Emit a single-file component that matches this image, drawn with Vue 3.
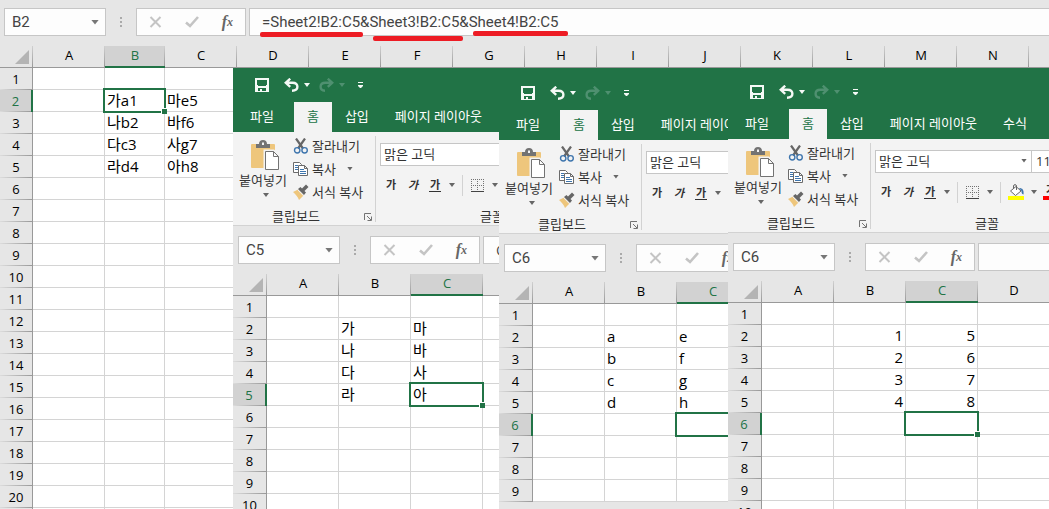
<script setup>
const letters = 'ABCDEFGHIJKLMNO'.split('')

const makeColumns = (count, narrow = {}) =>
  letters.slice(0, count).map((letter) => ({ letter, width: narrow[letter] ?? 72 }))

const main = {
  id: 'main',
  active: 'B2',
  formula: '=Sheet2!B2:C5&Sheet3!B2:C5&Sheet4!B2:C5',
  columns: makeColumns(15, { B: 60 }),
  rows: 21,
  gutter: 33,
  cells: {
    B2: '가a1', C2: '마e5',
    B3: '나b2', C3: '바f6',
    B4: '다c3', C4: '사g7',
    B5: '라d4', C5: '아h8'
  }
}

const tabs = ['파일', '홈', '삽입', '페이지 레이아웃', '수식']

const insets = [
  {
    id: 'sheet2',
    titleGap: 0,
    tabs: tabs.slice(0, 4),
    active: 'C5',
    formula: '아',
    columns: makeColumns(4),
    rows: 10,
    gutter: 34,
    cells: { B2: '가', C2: '마', B3: '나', C3: '바', B4: '다', C4: '사', B5: '라', C5: '아' }
  },
  {
    id: 'sheet3',
    titleGap: 8,
    tabs: tabs.slice(0, 4),
    active: 'C6',
    formula: '',
    columns: makeColumns(3),
    rows: 9,
    gutter: 34,
    cells: { B2: 'a', C2: 'e', B3: 'b', C3: 'f', B4: 'c', C4: 'g', B5: 'd', C5: 'h' }
  },
  {
    id: 'sheet4',
    titleGap: 7,
    tabs,
    active: 'C6',
    formula: '',
    columns: makeColumns(4),
    rows: 10,
    gutter: 34,
    cells: { B2: 1, C2: 5, B3: 2, C3: 6, B4: 3, C4: 7, B5: 4, C5: 8 }
  }
]

const books = [main, ...insets]

const tableWidth = (book) =>
  book.gutter + book.columns.reduce((sum, column) => sum + column.width, 0) + 'px'
const activeColumn = (book) => book.active[0]
const activeRow = (book) => Number(book.active.slice(1))
</script>

<template>
  <main class="desk">
    <section
      v-for="book in books"
      :key="book.id"
      class="book"
      :class="[book.id, { inset: book !== main }]"
    >
      <header v-if="book !== main" class="top">
        <div class="quick" :style="{ marginTop: book.titleGap + 'px' }">
          <button class="save" aria-label="저장">
            <svg width="14" height="14" viewBox="0 0 14 14" shape-rendering="crispEdges">
              <path fill="#f5f9f6" fill-rule="evenodd" d="M0 0H14V14H0ZM2 2V7H3V8H11V7H12V2ZM3 10V13H5V11H7V13H11V10Z" />
            </svg>
          </button>
          <button class="undo" aria-label="실행 취소">
            <svg width="15" height="14" viewBox="0 0 15 14" fill="none" stroke="#f5f9f6" stroke-width="2.4">
              <path d="M6.2 0.7L1.8 4.8L6.2 8.8M2.2 4.8H8.5C12 4.8 13.4 6.6 13.4 8.8C13.4 11.3 11.6 12.7 8 12.8" />
            </svg>
          </button>
          <i class="caret light"></i>
          <button class="redo" aria-label="다시 실행">
            <svg width="15" height="14" viewBox="0 0 15 14" fill="none" stroke="#4f9070" stroke-width="2.4">
              <path d="M8.8 0.7L13.2 4.8L8.8 8.8M12.8 4.8H6.5C3 4.8 1.6 6.6 1.6 8.8C1.6 11.3 3.4 12.7 6 12.8" />
            </svg>
          </button>
          <i class="caret faint"></i>
          <button class="customize" aria-label="빠른 실행 도구 모음 사용자 지정">
            <svg width="5" height="7" viewBox="0 0 5 7" fill="#f5f9f6">
              <path d="M0 0H5V1H0ZM0 3H5V4L3 6H2L0 4Z" />
            </svg>
          </button>
        </div>
        <nav class="tabs">
          <button v-for="tab in book.tabs" :key="tab" :class="{ file: tab === '파일', home: tab === '홈' }">{{ tab }}</button>
        </nav>
      </header>

      <div v-if="book !== main" class="ribbon">
        <div class="group clipboard">
          <div class="tools">
            <button class="paste">
              <svg width="28" height="30" viewBox="0 0 28 30">
                <rect x="0" y="4" width="24" height="24" rx="1" fill="#eec67c" />
                <path d="M5 8V4H8C8 1.5 9.5 0 12 0S16 1.5 16 4H19V8Z" fill="#737373" />
                <rect x="11" y="2.5" width="2" height="2.5" fill="#f3f3f3" />
                <path d="M14 11H22.5L27.5 16V29.5H14Z" fill="#fff" stroke="#f3f3f3" stroke-width="3" />
                <path d="M14.5 11.5H22.5L27.5 16.5V29.5H14.5ZM22.5 11.5V16.5H27.5" fill="#fff" stroke="#737373" />
              </svg>
              <span>붙여넣기</span>
              <i class="caret"></i>
            </button>
            <div class="actions">
              <button>
                <svg width="16" height="16" viewBox="0 0 16 16" fill="none">
                  <path d="M3 .5L10 10.5M12 .5L5 10.5" stroke="#666" stroke-width="2.2" />
                  <circle cx="4.2" cy="12.3" r="2.7" stroke="#3e75ad" stroke-width="1.4" />
                  <circle cx="11.6" cy="12.3" r="2.7" stroke="#3e75ad" stroke-width="1.4" />
                </svg>
                <span>잘라내기</span>
              </button>
              <button>
                <svg width="16" height="16" viewBox="0 0 16 16" fill="#fff" stroke="#6b6b6b">
                  <path d="M.5 1.5H6.5L8.5 3.5V11.5H.5Z" />
                  <path d="M2 4.5H5M2 6.5H5M2 8.5H5" stroke="#3e75ad" />
                  <path d="M5.5 4.5H11.5L14.5 7.5V14.5H5.5ZM11.5 4.5V7.5H14.5" />
                  <path d="M7 8.5H11M7 10.5H13M7 12.5H13" stroke="#3e75ad" />
                </svg>
                <span>복사</span>
                <i class="caret"></i>
              </button>
              <button>
                <svg width="16" height="16" viewBox="0 0 16 16">
                  <path d="M0 8L5 5.5L10.5 11.5L6 16C5 13 2.5 10 0 8Z" fill="#eec67c" />
                  <path d="M5 5L7.5 3L9 4.5L13 0.5L15.5 3L11.5 7L13 8.5L11 11Z" fill="#666" />
                  <path d="M4.5 5.5L10.5 11.8" stroke="#f3f3f3" />
                </svg>
                <span>서식 복사</span>
              </button>
            </div>
          </div>
          <div class="caption">
            <span>클립보드</span>
            <button aria-label="클립보드 옵션">
              <svg width="8" height="8" viewBox="0 0 8 8" fill="none" stroke="#737373">
                <path d="M.5 7V.5H7M3 3L7 7M7.5 3.5V7.5H3.5" />
              </svg>
            </button>
          </div>
        </div>

        <div class="group font">
          <div class="tools">
            <div class="pickers">
              <button class="family"><span>맑은 고딕</span><i class="caret"></i></button>
              <button class="size">11</button>
            </div>
            <div class="styles">
              <button class="ga bold">가</button>
              <button class="ga italic">가</button>
              <button class="ga underline">가</button>
              <i class="caret"></i>
              <i class="rule"></i>
              <button class="borders" aria-label="테두리">
                <svg width="13" height="13" viewBox="0 0 13 13" fill="none" stroke="#737373">
                  <path d="M0 .5H13M0 6.5H13M.5 0V12M6.5 0V12M12.5 0V12" stroke-dasharray="1 1" />
                  <path d="M0 12.5H13" stroke="#444" />
                </svg>
              </button>
              <i class="caret"></i>
              <i class="rule"></i>
              <button class="fill" aria-label="채우기 색">
                <svg width="17" height="16" viewBox="0 0 17 16" fill="none">
                  <path d="M2.5 7L8 2.5L13 7L7.5 11.5Z" fill="#fff" stroke="#666" />
                  <path d="M5.5 5V2C5.5.2 8.5.2 8.5 2V6" stroke="#666" />
                  <path d="M11 4C14.5 4 16 6 15.5 10.5C13.5 10 13.5 8 13.5 7Z" fill="#3e75ad" />
                  <path d="M0 12H16V16H0Z" fill="#ff0" />
                </svg>
              </button>
              <i class="caret"></i>
              <button class="ga colour">가</button>
            </div>
          </div>
          <div class="caption"><span>글꼴</span></div>
        </div>
      </div>

      <div class="formula-bar">
        <div class="name-box">
          <input :value="book.active" aria-label="이름 상자" readonly />
          <i class="caret wide"></i>
        </div>
        <div class="grip"><i></i><i></i><i></i></div>
        <div class="entry">
          <button aria-label="취소">
            <svg width="13" height="12" viewBox="0 0 13 12" fill="none" stroke="#c4c4c4" stroke-width="2">
              <path d="M1.5 1L11.5 11M11.5 1L1.5 11" />
            </svg>
          </button>
          <button aria-label="입력">
            <svg width="14" height="12" viewBox="0 0 14 12" fill="none" stroke="#c4c4c4" stroke-width="2.6">
              <path d="M1 6.5L5 10L13 1" />
            </svg>
          </button>
          <button class="fx" aria-label="함수 삽입">f<small>x</small></button>
        </div>
        <input class="formula" :value="book.formula" aria-label="수식 입력줄" readonly />
      </div>

      <div class="sheet">
        <table :style="{ width: tableWidth(book) }">
          <colgroup>
            <col :style="{ width: book.gutter + 'px' }" />
            <col v-for="column in book.columns" :key="column.letter" :style="{ width: column.width + 'px' }" />
          </colgroup>
          <thead>
            <tr>
              <th class="corner">
                <svg width="14" height="14" viewBox="0 0 14 14"><path d="M14 0V14H0Z" fill="#b4b4b4" /></svg>
              </th>
              <th
                v-for="column in book.columns"
                :key="column.letter"
                scope="col"
                :class="{ on: column.letter === activeColumn(book) }"
              >{{ column.letter }}</th>
            </tr>
          </thead>
          <tbody>
            <tr v-for="row in book.rows" :key="row">
              <th scope="row" :class="{ on: row === activeRow(book) }">{{ row }}</th>
              <td
                v-for="column in book.columns"
                :key="column.letter"
                :class="{
                  number: typeof book.cells[column.letter + row] === 'number',
                  active: column.letter + row === book.active
                }"
              >{{ book.cells[column.letter + row] }}<i v-if="column.letter + row === book.active" class="handle"></i></td>
            </tr>
          </tbody>
        </table>
      </div>
    </section>

    <i class="mark first"></i>
    <i class="mark second"></i>
    <i class="mark third"></i>
  </main>
</template>

<style>
body {
  margin: 0;
}
</style>

<style scoped>
.desk {
  position: relative;
  display: grid;
  grid-template-columns: 233px 266px 229px minmax(0, 1fr);
  grid-template-rows: 68px minmax(0, 1fr);
  height: 100vh;
  overflow: hidden;
  background: #e6e6e6;
  color: #000;
  font-family: "Open Sans", "Noto Sans CJK KR", sans-serif;
  font-size: 15px;
}
.book {
  min-width: 0;
  overflow: hidden;
  background: #e6e6e6;
}
.main { grid-area: 1 / 1 / 3 / 5; }
.sheet2 { grid-area: 2 / 2; }
.sheet3 { grid-area: 2 / 3; }
.sheet4 { grid-area: 2 / 4; }

button {
  display: flex;
  align-items: center;
  padding: 0;
  border: 0;
  background: none;
  color: inherit;
  font: inherit;
  white-space: nowrap;
}
svg {
  display: block;
  flex: none;
}
.caret {
  flex: none;
  width: 6px;
  height: 4px;
  background: #666;
  clip-path: polygon(0 0, 100% 0, 50% 100%);
}
.caret.light { background: #f5f9f6; }
.caret.faint { background: #4f9070; }
.caret.wide {
  width: 8px;
  height: 5px;
  background: #777;
}

.top {
  display: flow-root;
  background: #217346;
}
.quick {
  display: flex;
  align-items: center;
  height: 34px;
  padding-left: 22px;
}
.undo { margin-left: 15px; }
.redo { margin-left: 9px; }
.quick .caret { margin-left: 5px; }
.customize { margin-left: 13px; }
.tabs {
  display: flex;
  height: 30px;
  color: #fff;
  font-size: 13px;
}
.tabs button {
  flex: none;
  padding: 0 13px 4px;
}
.tabs .file { padding: 0 20px 4px 17px; }
.tabs .home {
  background: #f3f3f3;
  color: #217346;
}

.ribbon {
  display: flex;
  height: 93px;
  border-bottom: 1px solid #d2d2d2;
  background: #f3f3f3;
  color: #333;
  font-size: 13px;
  line-height: 16px;
}
.group {
  display: flex;
  flex: none;
  flex-direction: column;
  justify-content: space-between;
  box-sizing: border-box;
  height: 86px;
  margin-top: 4px;
}
.clipboard {
  width: 143px;
  border-right: 1px solid #d2d2d2;
}
.font { width: 232px; }
.clipboard .tools { display: flex; }
.paste {
  flex-direction: column;
  width: 60px;
  padding-top: 4px;
}
.paste svg { margin-left: 4px; }
.paste span { margin-top: 2px; }
.paste .caret { margin: 5px 0 0 6px; }
.actions { margin-top: -2px; }
.actions button {
  gap: 3px;
  height: 23px;
}
.actions .caret { margin-left: 8px; }
.caption {
  display: flex;
  align-items: center;
  height: 12px;
  line-height: 12px;
}
.caption span {
  width: 126px;
  text-align: center;
}
.caption button { margin: 2px 0 0 5px; }
.font .caption span { width: 100%; }

.pickers {
  display: flex;
  margin: 7px 0 0 4px;
}
.pickers button {
  box-sizing: border-box;
  height: 23px;
  padding-bottom: 2px;
  border: 1px solid #c6c6c6;
  background: #fff;
}
.pickers .family {
  justify-content: space-between;
  width: 157px;
  padding-left: 3px;
  padding-right: 4px;
}
.pickers .size {
  width: 48px;
  margin-left: -1px;
  padding-left: 4px;
}
.styles {
  display: flex;
  align-items: center;
  height: 22px;
  margin: 8px 0 0 9px;
}
.styles .ga {
  flex: none;
  justify-content: center;
  width: 12px;
  height: 14px;
  margin-right: 10px;
  font-size: 11px;
  font-weight: 700;
}
.styles .italic { font-style: italic; }
.styles .underline {
  margin-right: 8px;
  border-bottom: 1px solid #333;
}
.styles .rule {
  flex: none;
  width: 1px;
  height: 21px;
  margin: 0 8px 0 7px;
  background: #d2d2d2;
}
.borders + .caret { margin-left: 8px; }
.fill { margin-left: -1px; }
.fill + .caret { margin: 0 6px; }
.styles .colour {
  width: 16px;
  height: 16px;
  margin-right: 0;
  border-bottom: 4px solid #f00;
}

.formula-bar {
  display: flex;
  height: 28px;
  padding: 8px 0 10px 4px;
  color: #444;
  font-family: Roboto, "Noto Sans CJK KR", sans-serif;
}
.inset .formula-bar { padding: 10px 0 10px 5px; }
.name-box,
.entry,
.formula {
  box-sizing: border-box;
  height: 28px;
  border: 1px solid #c6c6c6;
  background: #fdfdfd;
}
.formula-bar input {
  outline: 0;
  color: inherit;
  font: inherit;
}
.name-box {
  display: flex;
  flex: none;
  align-items: center;
  width: 102px;
  padding: 0 6px 0 7px;
}
.name-box input {
  flex: 1;
  min-width: 0;
  padding: 0;
  border: 0;
  background: none;
}
.grip {
  display: flex;
  flex: none;
  flex-direction: column;
  justify-content: center;
  gap: 2px;
  width: 30px;
}
.grip i {
  width: 2px;
  height: 2px;
  margin-left: 14px;
  background: #aaa;
}
.entry {
  display: flex;
  flex: none;
  align-items: center;
  justify-content: space-between;
  width: 110px;
  padding: 0 12px;
}
.fx {
  color: #666;
  font: italic bold 16px/20px "Liberation Serif", serif;
}
.fx small { font-size: 12px; }
.formula {
  flex: 1;
  min-width: 60px;
  margin-left: 3px;
  padding: 0 12px;
  border-right: 0;
}

.sheet {
  overflow: hidden;
  background: #fff;
}
table {
  table-layout: fixed;
  border-spacing: 0;
}
th,
td {
  box-sizing: border-box;
  height: 22px;
  line-height: 19px;
  white-space: nowrap;
}
th {
  padding: 0;
  font-size: 13px;
  font-weight: 400;
}
thead th {
  padding-bottom: 2px;
  border-bottom: 1px solid #999;
  background: linear-gradient(#d0d0d0, #999) right / 1px 100% no-repeat #e6e6e6;
}
thead th.on {
  padding-bottom: 1px;
  border-bottom: 2px solid #217346;
  background-color: #d2d2d2;
}
tbody th {
  border-right: 1px solid #999;
  background: linear-gradient(to right, #dcdcdc, #999) bottom / 100% 1px no-repeat #e6e6e6;
}
tbody th.on {
  border-right: 2px solid #217346;
  background-color: #d2d2d2;
}
th.on { color: #217346; }
.corner svg { margin: 2px 4px 0 auto; }
td {
  padding: 1px 2px;
  border: solid #d4d4d4;
  border-width: 0 1px 1px 0;
}
.number { text-align: right; }
.active { position: relative; }
.active::before {
  content: "";
  position: absolute;
  inset: -2px;
  border: 2px solid #217346;
}
.handle {
  position: absolute;
  right: -3px;
  bottom: -3px;
  width: 5px;
  height: 5px;
  border: solid #fff;
  border-width: 1px 0 0 1px;
  background: #217346;
}

.mark {
  position: absolute;
  height: 5px;
  border-radius: 2px;
  background: #ed1c24;
}
.first { left: 260px; top: 32px; width: 103px; }
.second { left: 373px; top: 36px; width: 90px; }
.third { left: 473px; top: 31px; width: 95px; }
</style>
